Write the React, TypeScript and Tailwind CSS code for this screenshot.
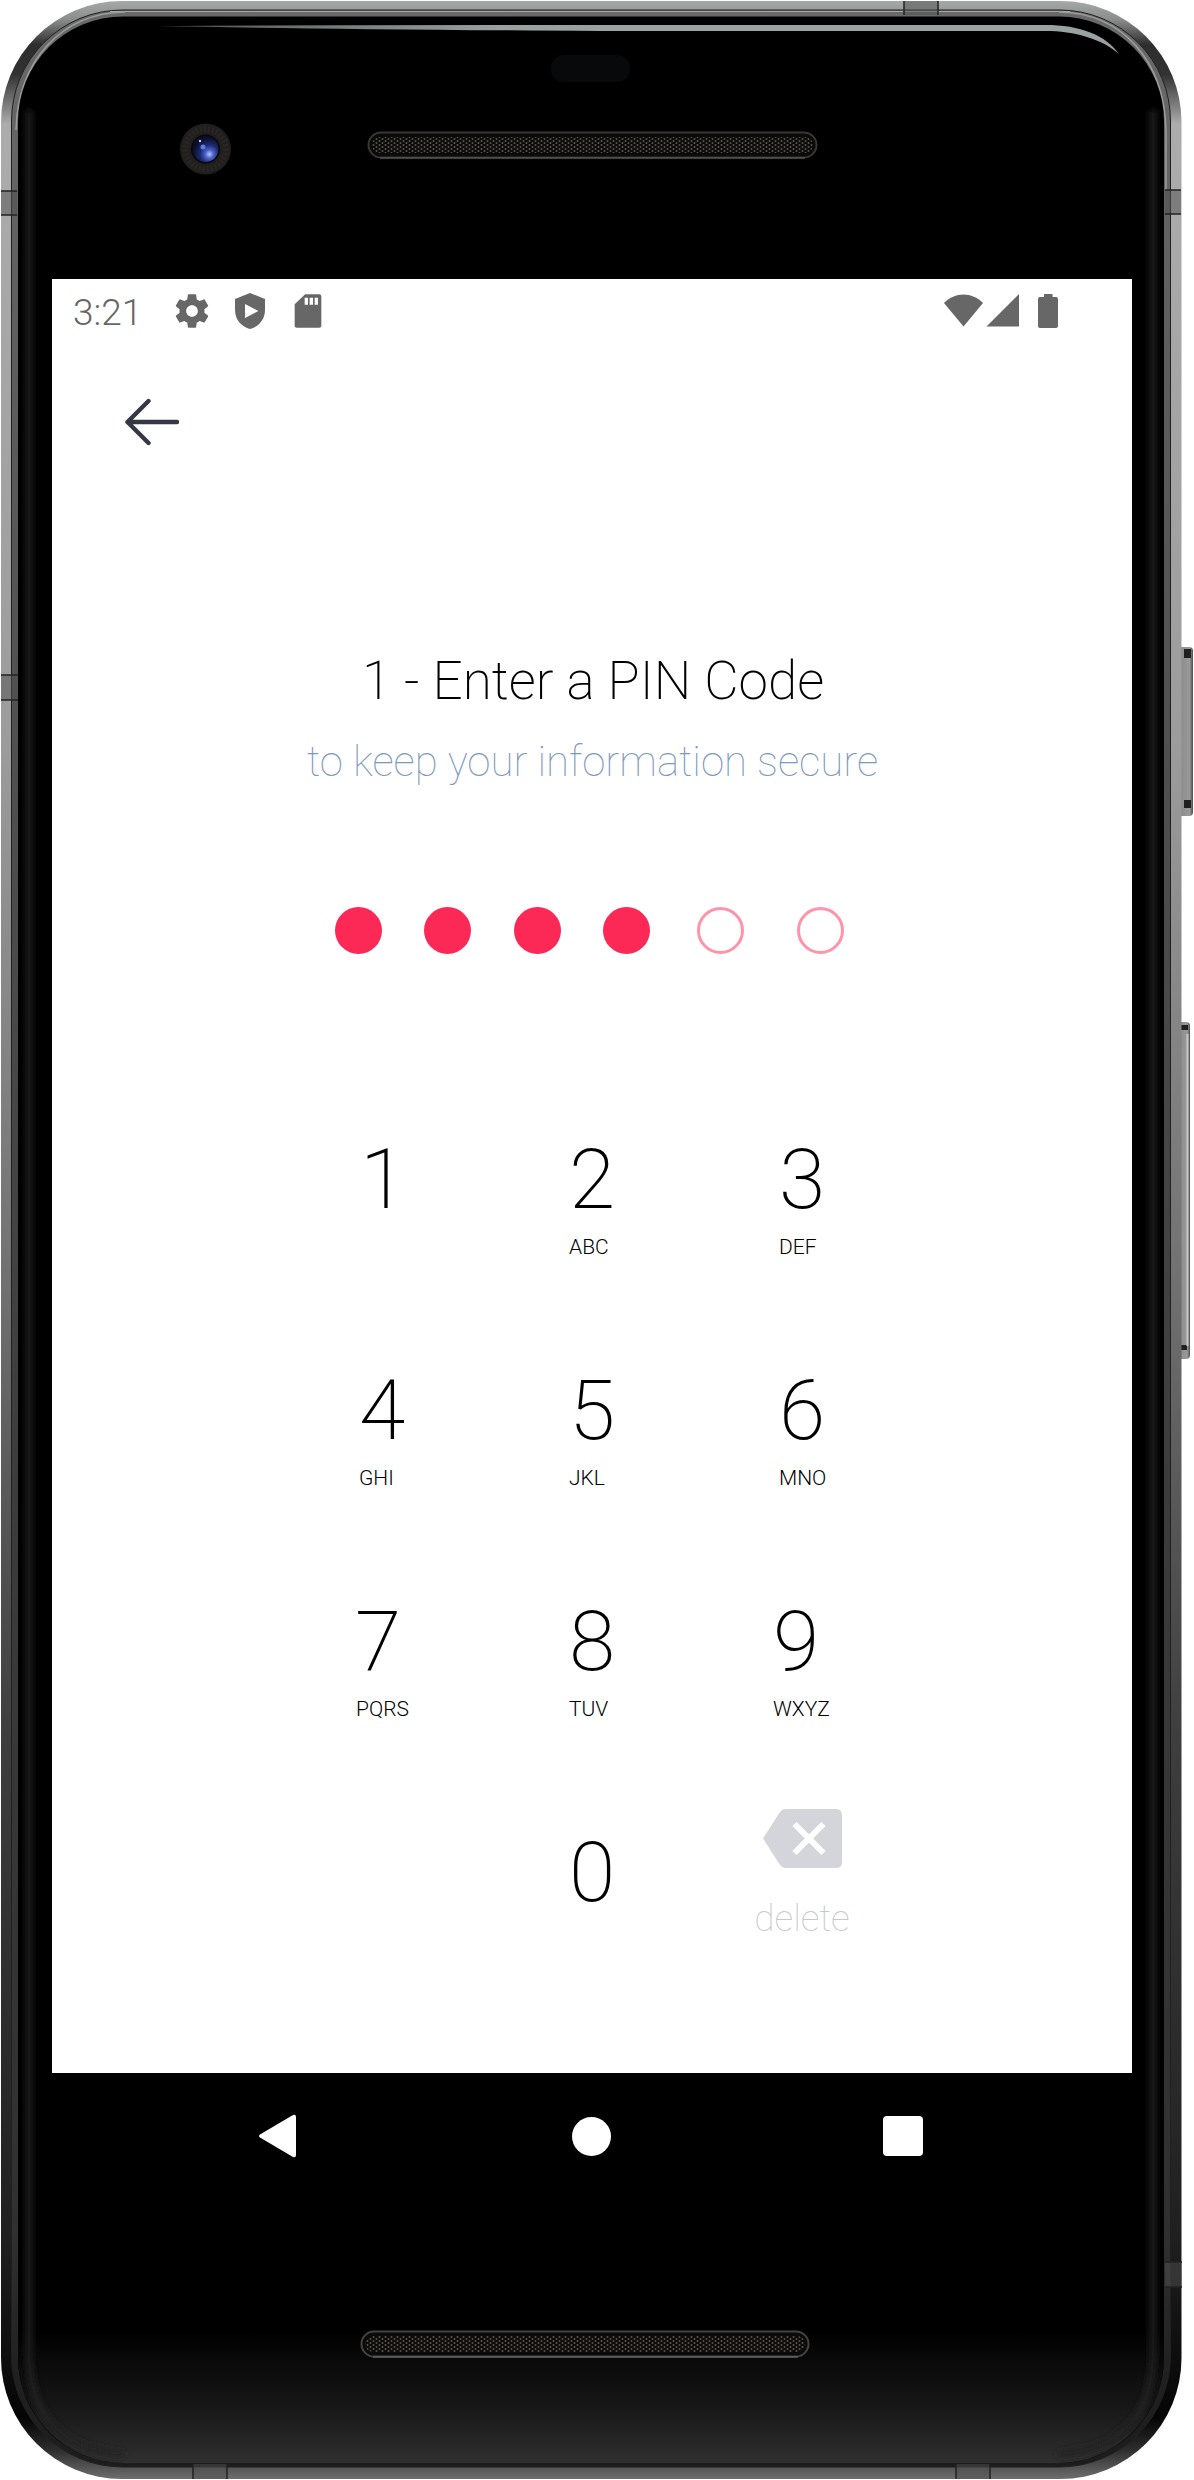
const keys = [
  { d: "1", l: "", digit: "ml-[3px]", label: "" },
  { d: "2", l: "ABC", digit: "ml-[2px]", label: "ml-[2px]" },
  { d: "3", l: "DEF", digit: "ml-[2px]", label: "ml-[2px]" },
  { d: "4", l: "GHI", digit: "ml-[2px]", label: "ml-[2px]" },
  { d: "5", l: "JKL", digit: "ml-[2px]", label: "ml-[2px]" },
  { d: "6", l: "MNO", digit: "ml-[2px]", label: "ml-[2px]" },
  { d: "7", l: "PQRS", digit: "-ml-[2px]", label: "-ml-[1px]" },
  { d: "8", l: "TUV", digit: "ml-[2px]", label: "ml-[2px]" },
  { d: "9", l: "WXYZ", digit: "-ml-[4px]", label: "-ml-[4px]" },
];

const dots = [
  { filled: true, gap: "" },
  { filled: true, gap: "ml-[42px]" },
  { filled: true, gap: "ml-[43px]" },
  { filled: true, gap: "ml-[42px]" },
  { filled: false, gap: "ml-[47px]" },
  { filled: false, gap: "ml-[53px]" },
];

function DeviceArt() {
  return (
    <svg className="absolute inset-0 h-[2480px] w-[1194px]" viewBox="0 0 1194 2480" fill="none">
      <defs>
        <linearGradient id="rim" x1="0" y1="0" x2="0" y2="2480" gradientUnits="userSpaceOnUse">
          <stop offset="0" stopColor="#a6aaa8" />
          <stop offset="0.008" stopColor="#8b8c8c" />
          <stop offset="0.018" stopColor="#2e2e2e" />
          <stop offset="0.03" stopColor="#323232" />
          <stop offset="0.05" stopColor="#acacac" />
          <stop offset="0.3" stopColor="#9c9c9c" />
          <stop offset="0.52" stopColor="#707070" />
          <stop offset="0.7" stopColor="#3e3e3e" />
          <stop offset="0.9" stopColor="#202020" />
          <stop offset="0.975" stopColor="#050505" />
          <stop offset="0.988" stopColor="#2e2e2e" />
          <stop offset="1" stopColor="#707070" />
        </linearGradient>
        <linearGradient id="bevel" x1="0" y1="0" x2="0" y2="2480" gradientUnits="userSpaceOnUse">
          <stop offset="0" stopColor="#6a6a6a" />
          <stop offset="0.3" stopColor="#505050" />
          <stop offset="0.6" stopColor="#3c3c3c" />
          <stop offset="0.9" stopColor="#303030" />
          <stop offset="0.96" stopColor="#202020" />
          <stop offset="1" stopColor="#1c1c1c" />
        </linearGradient>
        <linearGradient id="floor" x1="0" y1="2330" x2="0" y2="2463" gradientUnits="userSpaceOnUse">
          <stop offset="0" stopColor="#000" />
          <stop offset="0.6" stopColor="#181818" />
          <stop offset="1" stopColor="#303030" />
        </linearGradient>
        <linearGradient id="shine" x1="150" y1="0" x2="500" y2="0" gradientUnits="userSpaceOnUse">
          <stop offset="0" stopColor="#4a5150" />
          <stop offset="1" stopColor="#98a3a1" />
        </linearGradient>
        <linearGradient id="button" x1="0" y1="0" x2="1" y2="0">
          <stop offset="0" stopColor="#666" />
          <stop offset="0.3" stopColor="#8c8c8c" />
          <stop offset="0.8" stopColor="#9a9a9a" />
          <stop offset="1" stopColor="#4a4a4a" />
        </linearGradient>
        <radialGradient id="lens" cx="0.65" cy="0.7" r="0.65">
          <stop offset="0" stopColor="#b8c2f8" />
          <stop offset="0.25" stopColor="#4a62c8" />
          <stop offset="0.55" stopColor="#1c2a70" />
          <stop offset="1" stopColor="#0a0d24" />
        </radialGradient>
        <pattern id="mesh" width="6" height="4" patternUnits="userSpaceOnUse">
          <rect width="6" height="4" fill="#0c0b0a" />
          <circle cx="1.5" cy="1" r="1" fill="#5a554c" />
          <circle cx="4.5" cy="3" r="1" fill="#5a554c" />
        </pattern>
        <filter id="soft" x="-5%" y="-5%" width="110%" height="110%">
          <feGaussianBlur stdDeviation="3" />
        </filter>
        <clipPath id="glassClip">
          <rect x="18" y="17" width="1146" height="2446" rx="106" />
        </clipPath>
      </defs>
      {/* side buttons */}
      <rect x="1176" y="647" width="17" height="169" rx="4" fill="url(#button)" />
      <path d="M1184 649h7v9h-7zM1184 800h7v8h-7z" fill="#202020" />
      <rect x="1176" y="1022" width="14" height="337" rx="4" fill="url(#button)" />
      <path d="M1180 1025h8v5h-8zM1180 1345h7v5h-7z" fill="#202020" />
      <path d="M1187.500 1034v312" stroke="#c8c8c8" strokeWidth="2" />
      {/* metal body */}
      <rect x="1" y="1" width="1180.500" height="2478" rx="121" fill="url(#rim)" />
      <rect x="11.500" y="10" width="1159" height="2457" rx="111" fill="url(#bevel)" stroke="#202020" />
      <path d="M110 11.500H1070" stroke="#a8a8a8" />
      <path d="M16 130C18 60 62 13 125 12M1059 12C1122 13 1164 60 1166 130V190" stroke="#9c9c9c" strokeWidth="1.500" />
      {/* antenna breaks */}
      <path d="M1 191H17V215H1zM1165 190H1181V214H1165zM1 675H18V700H1zM904 1H938V15H904zM1165 2262H1182V2287H1165zM193 2464H227V2479H193zM956 2464H990V2479H956z" fill="#505050" fillOpacity="0.5" />
      <path d="M1 191H17M1 215H17M1165 190H1181M1165 214H1181M1 675H18M1 700H18M904 1V15M938 1V15M1165 2262H1182M1165 2287H1182M193 2464V2479M227 2464V2479M956 2464V2479M990 2464V2479" stroke="#222" strokeWidth="1.500" />
      {/* glass */}
      <rect x="18" y="16.500" width="1146" height="2446.500" rx="105" fill="#000" />
      <g clipPath="url(#glassClip)">
        <rect x="18" y="2330" width="1146" height="134" fill="url(#floor)" />
        <path d="M29 110V2350Q29 2448 124 2454M1153 110V2350Q1153 2448 1058 2454" stroke="#242424" strokeWidth="6" filter="url(#soft)" />
      </g>
      <path d="M158 26Q300 25 500 25H1040C1078 24 1105 34 1119 54C1102 39 1075 31 1045 31H600Q300 29 158 26Z" fill="url(#shine)" />
      {/* sensor and camera */}
      <rect x="551" y="55" width="79" height="27" rx="13" fill="#08090b" />
      <circle cx="205.500" cy="149" r="25.500" fill="#211e1e" />
      <circle cx="205.500" cy="149" r="20" stroke="#2a2626" strokeWidth="6" strokeDasharray="2 2" />
      <circle cx="205.500" cy="149" r="14.500" fill="#08080d" />
      <circle cx="205.500" cy="149" r="13" fill="url(#lens)" />
      <circle cx="203" cy="147" r="2.500" fill="#5f7be0" />
      <circle cx="200" cy="141" r="1.200" fill="#c3cdf5" />
      {/* speakers */}
      <rect x="368.500" y="132.500" width="448" height="25" rx="12.500" fill="#0b0a0a" stroke="#393637" strokeWidth="2" />
      <rect x="372" y="137" width="441" height="16" rx="8" fill="url(#mesh)" />
      <path d="M380 158H805" stroke="#666" />
      <rect x="361.500" y="2331.500" width="447" height="25" rx="12.500" fill="#0b0a0a" stroke="#454342" strokeWidth="2" />
      <rect x="365" y="2336" width="440" height="16" rx="8" fill="url(#mesh)" />
      <path d="M373 2357H798" stroke="#777" />
    </svg>
  );
}

function StatusBar() {
  return (
    <header className="flex h-[63px] items-center pl-[21px] pr-[72px] text-[#676767]">
      <span className="w-[99px] pt-[3px] text-[37px] font-[350] leading-none">3:21</span>
      <svg className="h-10 w-10" viewBox="0 0 24 24" fill="currentColor">
        <path d="M19.430 12.980c.04-.32.07-.64.07-.98s-.03-.66-.07-.98l2.110-1.650c.19-.15.24-.42.12-.64l-2-3.460c-.12-.22-.39-.3-.61-.22l-2.490 1c-.52-.4-1.080-.73-1.690-.98l-.38-2.650C14.460 2.180 14.250 2 14 2h-4c-.25 0-.46.18-.49.42l-.38 2.650c-.61.25-1.170.59-1.690.98l-2.490-1c-.23-.09-.49 0-.61.22l-2 3.460c-.13.22-.07.49.12.64l2.110 1.650c-.04.32-.07.65-.07.98s.03.66.07.98l-2.110 1.650c-.19.15-.24.42-.12.64l2 3.460c.12.22.39.3.61.22l2.490-1c.52.4 1.080.73 1.690.98l.38 2.650c.03.24.24.42.49.42h4c.25 0 .46-.18.49-.42l.38-2.650c.61-.25 1.170-.59 1.690-.98l2.490 1c.23.09.49 0 .61-.22l2-3.460c.12-.22.07-.49-.12-.64l-2.110-1.650zM12 15.500c-1.930 0-3.500-1.570-3.500-3.500s1.570-3.500 3.500-3.500 3.500 1.570 3.500 3.500-1.570 3.500-3.500 3.500z" />
      </svg>
      <svg className="ml-[23px] h-9 w-[30px]" viewBox="0 0 30 36" fill="currentColor" fillRule="evenodd">
        <path d="M15 0L30 6V17C30 27 23 34 15 36C7 34 0 27 0 17V6ZM10 11V25L23.500 18Z" />
      </svg>
      <svg className="ml-[23px] h-10 w-10" viewBox="0 0 24 24" fill="currentColor">
        <path d="M18.800 2h-8.500L4 8V20.800Q4 22 5.200 22H18.800Q20 22 20 20.800V3.200Q20 2 18.800 2zM12 8.200h-2V4h2zm3 0h-2V4h2zm3 0h-2V4h2z" />
      </svg>
      <svg className="ml-auto h-[34px] w-[116px]" viewBox="0 0 116 34" fill="currentColor">
        <path d="M0 9C11-2.500 28-2.500 39 9L19.500 32.500Z" />
        <path d="M75 0V32.500H42.500Z" />
        <path d="M100 3V0H108.500V3H112Q114 3 114 5V32Q114 34 112 34H96Q94 34 94 32V5Q94 3 96 3Z" />
      </svg>
    </header>
  );
}

export default function App() {
  return (
    <div className="relative flex h-[2480px] w-[1194px] flex-col overflow-hidden bg-white font-['Roboto']">
      <DeviceArt />
      <main className="relative ml-[52px] mt-[279px] flex h-[1794px] w-[1080px] flex-col bg-white">
        <StatusBar />
        <button className="ml-[73px] mt-[56px] h-[48px] w-[55px]">
          <svg className="h-[48px] w-[55px]" viewBox="0 0 55 48" fill="none" stroke="#343846" strokeWidth="4.400" strokeLinecap="round" strokeLinejoin="round">
            <path d="M52 24H2.500M23.500 3L2.500 24L23.500 45" />
          </svg>
        </button>
        <div className="ml-[255px] mt-[203px] whitespace-nowrap">
          <h1 className="ml-[55px] text-[53px] font-extralight leading-[64px] tracking-[0.06px] text-black">1 - Enter a PIN Code</h1>
          <p className="mt-[21px] text-[42px] font-thin leading-[56px] tracking-[-0.03px] text-[#7d98bd]">to keep your information secure</p>
        </div>
        <div className="ml-[283px] mt-[117px] flex">
          {dots.map((dot, i) => (
            <span key={i} className={`${dot.gap} h-[47px] w-[47px] shrink-0 rounded-full ${dot.filled ? "bg-[#fc2855]" : "border-[3px] border-[#ff93a9]"}`} />
          ))}
        </div>
        <section className="ml-[305px] mt-[176px] grid w-[630px] grid-cols-[210px_210px_210px] auto-rows-[231px]">
          {keys.map((k) => (
            <button key={k.d} className="flex flex-col items-start text-left text-black">
              <span className={`text-[84px] font-extralight leading-[100px] ${k.digit}`}>{k.d}</span>
              <span className={`mt-[3px] text-[21px] font-light leading-[28px] ${k.label}`}>{k.l}</span>
            </button>
          ))}
          <span />
          <button className="flex items-start pl-[2px] text-[84px] font-extralight leading-[100px] text-black">0</button>
          <button className="-ml-[23px] -mt-[14px] flex w-[96px] flex-col items-center text-[#d4d5db]">
            <svg className="h-[59px] w-[79px] shrink-0" viewBox="0 0 79 59">
              <path d="M22 0H73Q79 0 79 6V53Q79 59 73 59H22Q19 59 17 56L0 29.500L17 3Q19 0 22 0Z" fill="currentColor" />
              <path d="M31.500 15L60.500 44M60.500 15L31.500 44" stroke="#fff" strokeWidth="6" />
            </svg>
            <span className="mt-[23px] text-[37px] font-thin text-[#c6c7cf]">delete</span>
          </button>
        </section>
      </main>
      <nav className="relative ml-[259px] mt-[41px] flex w-[664px] items-center">
        <svg className="h-[44px] w-[38px]" viewBox="0 0 38 44" fill="#fff"><path d="M1 20.500Q-1 22 1 23.500L34 43Q37 44 37 41V3Q37 0 34 1Z" /></svg>
        <span className="ml-[275px] h-[39px] w-[39px] rounded-full bg-white" />
        <span className="ml-auto h-[40px] w-[40px] rounded-[4px] bg-white" />
      </nav>
    </div>
  );
}
